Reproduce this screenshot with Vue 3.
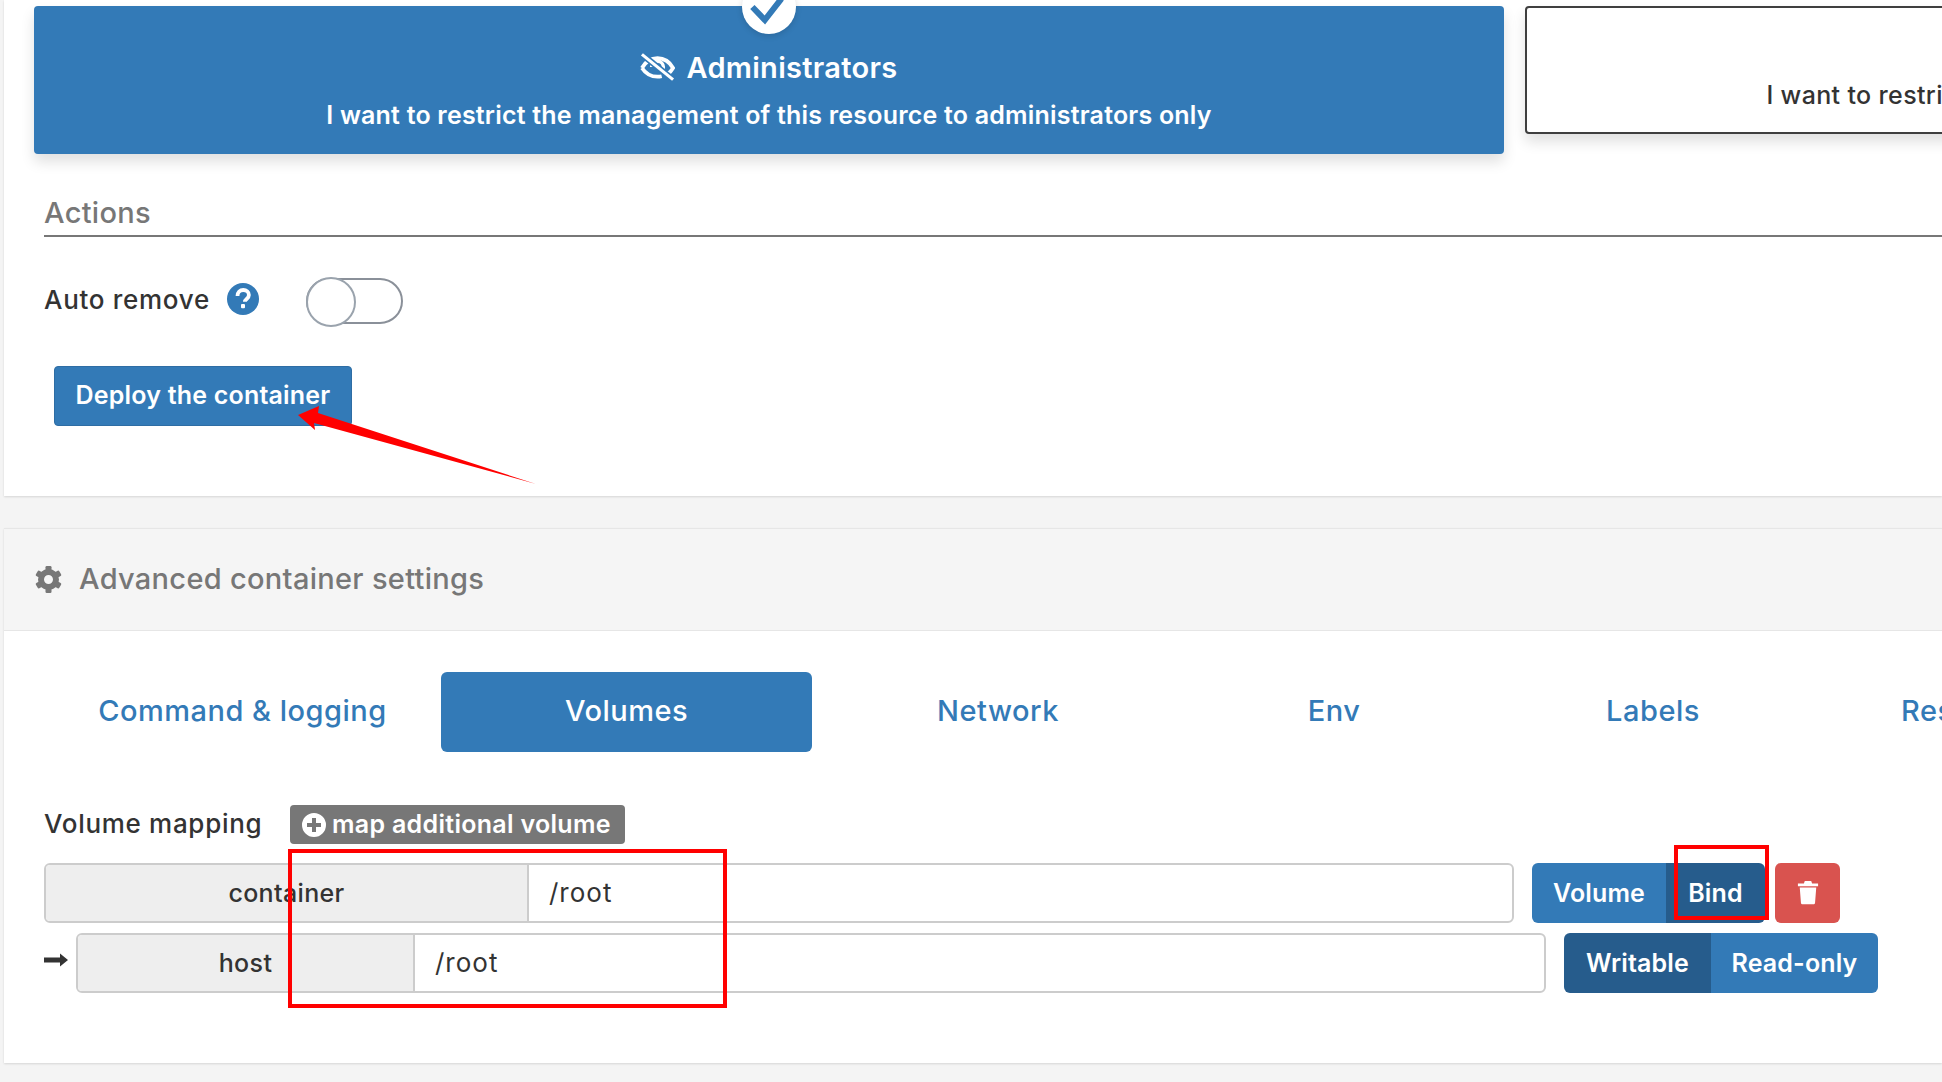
<script setup>
const tabs = [
  { label: 'Command & logging' },
  { label: 'Volumes', active: true },
  { label: 'Network' },
  { label: 'Env' },
  { label: 'Labels' },
  { label: 'Restart policy' },
]
const teeth = [0, 60, 120, 180, 240, 300]
</script>

<template>
  <div class="page">
    <section class="panel panel-top">
      <div class="cards">
        <div class="card card-on">
          <span class="check">
            <svg viewBox="0 0 52 52" width="54" height="54"><path d="M10 26l12 12.500L38 18" fill="none" stroke="#337ab7" stroke-width="5.800"/></svg>
          </span>
          <div class="card-title">
            <svg class="eye" viewBox="0 0 36 28" width="35" height="28">
              <path d="M2 15C6 8 11 5 18 5s12 3 16 10c-1.500 2.500-3 4.300-5 5.800" fill="none" stroke="#fff" stroke-width="3.900"/>
              <path d="M2 15c4 6 9 9 16 9 1.500 0 3-.2 4.300-.5" fill="none" stroke="#fff" stroke-width="3.900"/>
              <path d="M12 14a6 6 0 0112 0c0 1.300-.4 2.500-1 3.500" fill="none" stroke="#fff" stroke-width="3.600"/>
              <path d="M2 1l32 26" stroke="#337ab7" stroke-width="6.500" fill="none"/>
              <path d="M2 1l32 26" stroke="#fff" stroke-width="3.200" fill="none"/>
            </svg>
            <span>Administrators</span>
          </div>
          <div class="card-text">I want to restrict the management of this resource to administrators only</div>
        </div>
        <div class="card card-off">
          <div class="card-title">Restricted</div>
          <div class="card-text">I want to restrict the management of this resource to a set of users and/or teams</div>
        </div>
      </div>

      <h3 class="section-title">Actions</h3>

      <div class="auto-row">
        <span class="auto-label">Auto remove</span>
        <svg class="help" viewBox="0 0 32 32" width="32" height="32">
          <circle cx="16" cy="16" r="16" fill="#337ab7"/>
          <path d="M10.500 12.500c0-3.500 2.500-6 5.800-6 3.200 0 5.600 2.200 5.600 5 0 3.900-4 4-4 6.800" fill="none" stroke="#fff" stroke-width="3.800" transform="translate(0 .5)"/>
          <rect x="14" y="21" width="4" height="4.200" rx="1" fill="#fff"/>
        </svg>
        <span class="toggle"><span class="knob"></span></span>
      </div>

      <button class="deploy">Deploy the container</button>
    </section>

    <section class="panel panel-adv">
      <header class="adv-head">
        <svg class="gear" viewBox="0 0 27 27" width="27" height="27">
          <circle cx="13.500" cy="13.500" r="7.500" fill="none" stroke="#777" stroke-width="6"/>
          <rect v-for="a in teeth" :key="a" x="10.500" y="0" width="6" height="6" rx="1.200" fill="#777" :transform="`rotate(${a} 13.500 13.500)`"/>
        </svg>
        <span class="adv-title">Advanced container settings</span>
      </header>

      <nav class="tabs">
        <a v-for="t in tabs" :key="t.label" class="tab" :class="{ active: t.active }">{{ t.label }}</a>
      </nav>

      <div class="vm-head">
        <span class="vm-label">Volume mapping</span>
        <span class="vm-add">
          <svg viewBox="0 0 24 24" width="24" height="24">
            <path fill-rule="evenodd" fill="#fff" d="M12 0a12 12 0 110 24 12 12 0 010-24zm-2 5v5H5v4h5v5h4v-5h5v-4h-5V5z"/>
          </svg>
          map additional volume
        </span>
      </div>

      <div class="vm-row row-a">
        <div class="field">
          <span class="addon addon-a">container</span>
          <span class="value">/root</span>
        </div>
        <div class="group">
          <span class="seg">Volume</span>
          <span class="seg seg-dark seg-bind">Bind</span>
        </div>
        <button class="trash">
          <svg viewBox="0 0 24 28" width="22" height="26">
            <path fill="#fff" d="M8.500 1h7l1 2.500H23v3H1v-3h6.500zM3 8h18l-1.300 16.500c-.1 1-.9 1.800-2 1.800H6.300c-1.100 0-1.900-.8-2-1.800z"/>
          </svg>
        </button>
      </div>

      <div class="vm-row row-b">
        <svg class="long-arrow" viewBox="0 0 24 16" width="24" height="16">
          <path d="M0 5.500h16V1.500L24 8l-8 6.500v-4H0z" fill="#333"/>
        </svg>
        <div class="field field-b">
          <span class="addon addon-b">host</span>
          <span class="value">/root</span>
        </div>
        <div class="group">
          <span class="seg seg-dark seg-w">Writable</span>
          <span class="seg seg-r">Read-only</span>
        </div>
      </div>

      <span class="mark mark-wide"></span>
      <span class="mark mark-bind"></span>
    </section>

    <svg class="red-arrow" viewBox="0 0 1942 1082" width="1942" height="1082">
      <path d="M536 484L314 423l1 7-17-15 21-9-1 7z" fill="#f00"/>
    </svg>
  </div>
</template>

<style>
html, body { margin: 0; overflow: hidden; background: #f4f4f4; }
</style>

<style scoped>
.page {
  position: relative;
  width: 1942px;
  height: 1082px;
  overflow: hidden;
  background: #f4f4f4;
  font-family: Inter, "Liberation Sans", sans-serif;
  font-size: 25px;
  letter-spacing: .35px;
  font-weight: 500;
  color: #333;
  padding-left: 4px;
  box-sizing: border-box;
}
.panel {
  background: #fff;
  width: 1938px;
  box-shadow: 0 1px 2px rgba(0, 0, 0, .12);
  position: relative;
}
.panel-top {
  height: 496px;
  padding: 6px 0 0 30px;
  box-sizing: border-box;
}
.cards { display: flex; align-items: flex-start; gap: 21px; width: 3000px; }
.card {
  position: relative;
  width: 1470px;
  flex: none;
  box-sizing: border-box;
  border-radius: 4px;
  text-align: center;
  box-shadow: 0 8px 14px rgba(0, 0, 0, .12);
}
.card-on { height: 148px; background: #337ab7; color: #fff; padding-top: 43px; }
.card-off { height: 128px; background: #fff; border: 2px solid #3f3f3f; padding-top: 21px; color: #333; }
.card-title {
  display: flex;
  justify-content: center;
  align-items: center;
  gap: 11px;
  height: 36px;
  font-size: 29px;
  letter-spacing: .3px;
  font-weight: 600;
}
.card-text { margin-top: 12px; line-height: 36px; font-weight: 600; letter-spacing: .2px; }
.card-off .card-text { font-weight: 500; letter-spacing: .35px; }
.check {
  position: absolute;
  left: 708px;
  top: -26px;
  width: 54px;
  height: 54px;
  border-radius: 50%;
  background: #fff;
  display: block;
  box-shadow: 0 2px 6px rgba(0, 0, 0, .14);
}
.check svg { display: block; }
.section-title {
  margin: 38px 0 0 10px;
  height: 45px;
  box-sizing: border-box;
  width: 1930px;
  border-bottom: 2px solid #777;
  color: #777;
  font-size: 29px;
  letter-spacing: .3px;
  font-weight: 500;
  line-height: 42px;
}
.auto-row {
  display: flex;
  align-items: center;
  margin: 39px 0 0 10px;
  height: 50px;
}
.auto-label { width: 183px; font-size: 26px; letter-spacing: .7px; margin-top: -3px; white-space: nowrap; }
.help { margin-top: -4px; }
.toggle {
  position: relative;
  display: block;
  margin-left: 47px;
  width: 97px;
  height: 46px;
  border: 2px solid #8a9099;
  border-radius: 24px;
  box-sizing: border-box;
}
.knob {
  position: absolute;
  left: -2px;
  top: -3px;
  width: 50px;
  height: 50px;
  box-sizing: border-box;
  background: #fff;
  border: 2px solid #9aa3ad;
  border-radius: 50%;
}
.deploy {
  display: block;
  margin: 40px 0 0 20px;
  width: 298px;
  height: 60px;
  padding: 0 0 2px;
  border: 1px solid #2e6da4;
  border-radius: 4px;
  background: #337ab7;
  color: #fff;
  font: inherit;
  font-weight: 600;
  letter-spacing: .2px;
}
.panel-adv {
  margin-top: 32px;
  height: 535px;
}
.adv-head {
  height: 103px;
  box-sizing: border-box;
  display: flex;
  align-items: center;
  gap: 17px;
  padding-left: 31px;
  background: #f5f5f5;
  border-top: 1px solid #e6e6e6;
  border-bottom: 1px solid #e6e6e6;
  color: #777;
  font-size: 29px;
  letter-spacing: .3px;
}
.adv-title { margin-top: -2px; }
.tabs {
  display: grid;
  grid-template-columns: 397px 371px 372px 300px 338px 355px;
  margin: 41px 0 0 40px;
  font-size: 29px;
  letter-spacing: .5px;
  width: 2333px;
}
.tab {
  height: 80px;
  box-sizing: border-box;
  padding-bottom: 3px;
  display: flex;
  align-items: center;
  justify-content: center;
  color: #337ab7;
  border-radius: 6px;
  white-space: nowrap;
}
.tab.active { background: #337ab7; color: #fff; }
.vm-head {
  display: flex;
  align-items: center;
  margin: 53px 0 0 40px;
  height: 39px;
}
.vm-label { width: 246px; font-size: 26px; letter-spacing: .7px; white-space: nowrap; margin-top: -2px; }
.vm-add {
  display: flex;
  align-items: center;
  gap: 6px;
  height: 39px;
  width: 335px;
  box-sizing: border-box;
  padding: 0 0 2px 12px;
  background: #777;
  border-radius: 4px;
  color: #fff;
  font-weight: 600;
  letter-spacing: .3px;
  white-space: nowrap;
}
.vm-add svg { margin-top: 2px; }
.vm-row { display: flex; align-items: center; height: 60px; }
.row-a { margin: 19px 0 0 40px; }
.row-b { margin: 10px 0 0 40px; }
.field {
  display: flex;
  width: 1470px;
  height: 60px;
  box-sizing: border-box;
  border: 2px solid #ccc;
  border-radius: 6px;
  background: #fff;
  overflow: hidden;
}
.addon {
  display: flex;
  align-items: center;
  justify-content: center;
  background: #eee;
  border-right: 2px solid #ccc;
  flex: none;
  box-sizing: border-box;
}
.addon-a { width: 483px; }
.addon-b { width: 337px; }
.value { padding-left: 20px; line-height: 56px; font-size: 26px; letter-spacing: 1px; font-weight: 400; }
.group { display: flex; height: 60px; margin-left: 18px; color: #fff; font-weight: 600; letter-spacing: .15px; }
.seg {
  display: flex;
  align-items: center;
  justify-content: center;
  background: #337ab7;
  box-sizing: border-box;
  border-radius: 6px 0 0 6px;
  width: 134px;
}
.seg-dark { background: #265c8c; }
.seg-bind { width: 99px; border-radius: 0 6px 6px 0; }
.seg-w { width: 147px; }
.seg-r { width: 167px; border-radius: 0 6px 6px 0; }
.trash {
  display: flex;
  align-items: center;
  justify-content: center;
  width: 65px;
  height: 60px;
  margin-left: 10px;
  padding: 0;
  border: 0;
  border-radius: 6px;
  background: #d9534f;
}
.long-arrow { margin: -6px 8px 0 0; flex: none; }
.mark { position: absolute; border: 4px solid #f00; box-sizing: border-box; pointer-events: none; }
.mark-wide { left: 284px; top: 321px; width: 439px; height: 159px; }
.mark-bind { left: 1670px; top: 317px; width: 95px; height: 75px; }
.red-arrow { position: absolute; left: 0; top: 0; pointer-events: none; }
</style>
